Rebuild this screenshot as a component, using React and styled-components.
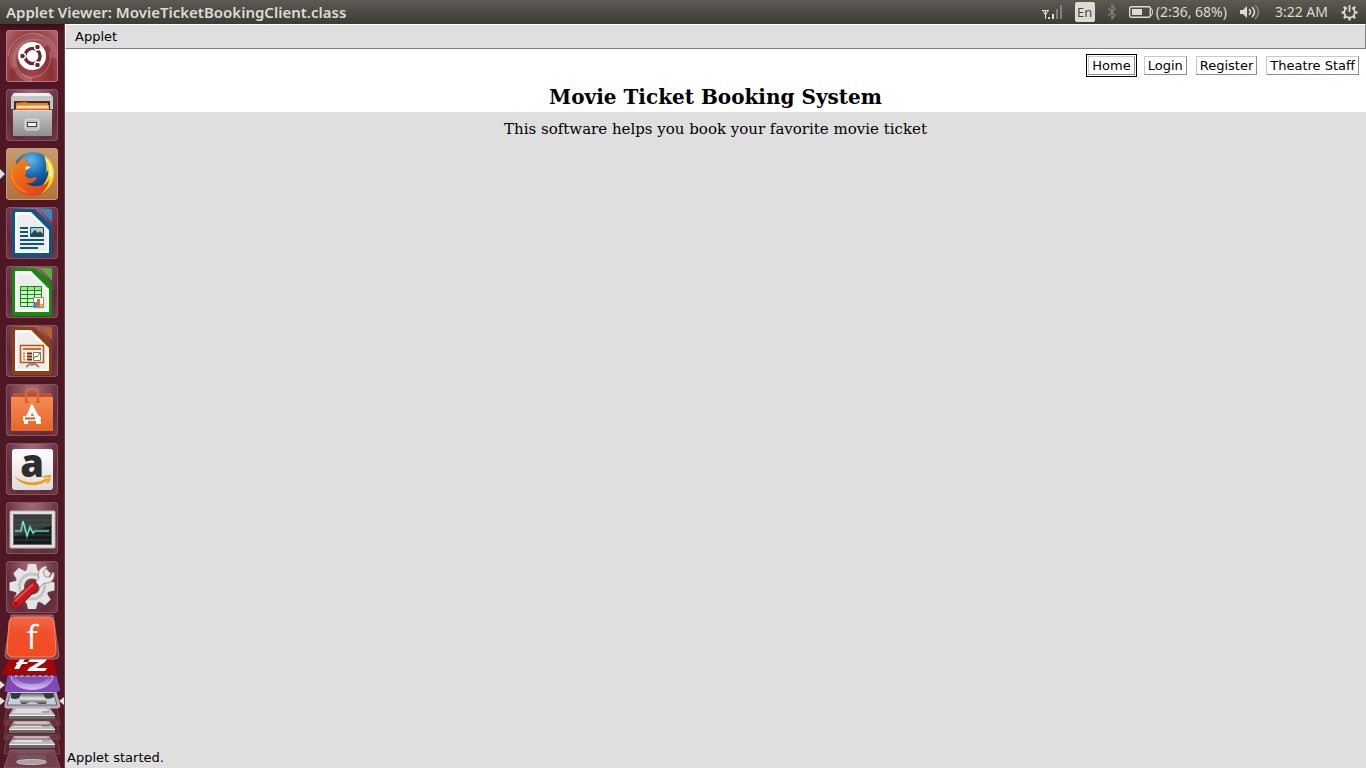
import React from 'react';
import styled, { createGlobalStyle } from 'styled-components';

const GlobalStyle = createGlobalStyle`
  * { box-sizing: border-box; }
  body { margin: 0; background: #dfdfdf; }
  button { font: inherit; cursor: default; }
`;

const ubuntuFont = '"Noto Sans", "Open Sans", sans-serif';

const Desktop = styled.div`
  display: grid;
  grid-template-rows: 24px 1fr;
  height: 100vh;
  overflow: hidden;
`;

const TopPanel = styled.header`
  display: flex;
  justify-content: space-between;
  align-items: center;
  padding: 0 8px 0 6px;
  background: linear-gradient(#5c5a51, #3c3b37);
  color: #dfdbd2;
  font-family: ${ubuntuFont};
`;

const WindowTitle = styled.h1`
  margin: 0;
  font-size: 15px;
  line-height: 24px;
  font-weight: 600;
`;

const Indicators = styled.div`
  display: flex;
  align-items: center;
  gap: 13px;
  font-size: 14px;
  line-height: 24px;
`;

const Indicator = styled.button`
  display: flex;
  align-items: center;
  gap: 3px;
  padding: 0;
  border: 0;
  background: none;
  color: inherit;
  white-space: nowrap;
  svg { display: block; }
`;

const KeyboardBadge = styled.span`
  width: 20px;
  height: 20px;
  border-radius: 2px;
  background: #dfdbd2;
  color: #4a4841;
  font-size: 13px;
  line-height: 20px;
  text-align: center;
`;

const Body = styled.div`
  display: grid;
  grid-template-columns: 65px 1fr;
  min-height: 0;
`;

const Launcher = styled.nav`
  display: flex;
  flex-direction: column;
  align-items: flex-start;
  overflow: hidden;
  padding-top: 6px;
  border-right: 1px solid #6b4357;
  background: linear-gradient(#390d17, #4f1723 8px, #501824);
`;

const Tile = styled.button`
  flex: none;
  width: 52px;
  height: 52px;
  margin: 0 0 7px 6px;
  padding: 0;
  border: 0;
  border-radius: 4px;
  background: ${(p) => p.$fill};
  box-shadow: inset 0 0 0 1px ${(p) => p.$edge || '#865460'};
  svg { display: block; overflow: visible; }
`;

const TileSlot = styled.div`
  position: relative;
`;

const RunningMark = styled.svg`
  position: absolute;
  left: 0;
  top: 21px;
`;

const Stack = styled.div`
  flex: none;
  height: 155px;
  margin-top: -7px;
  svg { display: block; }
`;

const AppletWindow = styled.main`
  display: flex;
  flex-direction: column;
  min-width: 0;
  background: #dfdfdf;
  color: #000;
  font-family: "DejaVu Sans", sans-serif;
  font-size: 13px;
`;

const MenuBar = styled.div`
  flex: none;
  display: flex;
  align-items: center;
  height: 25px;
  border: 1px solid #808080;
  border-top-color: #fff;
  border-left-color: #fff;
`;

const MenuItem = styled.button`
  padding: 0 9px;
  border: 0;
  background: none;
  color: inherit;
`;

const Heading = styled.section`
  flex: none;
  height: 63px;
  background: #fff;
`;

const ButtonRow = styled.div`
  display: flex;
  justify-content: flex-end;
  align-items: center;
  gap: 9px;
  padding: 7px 7px 0 0;
`;

const AwtButton = styled.button`
  height: 19px;
  padding: 0 3px;
  border: 1px solid;
  border-color: #c8c8c8 #8c8c8c #8c8c8c #c8c8c8;
  outline: ${(p) => (p.$focused ? '1px solid #000' : '0')};
  outline-offset: 1px;
  background: #fff;
  color: #000;
  line-height: 17px;
`;

const Title = styled.h2`
  margin: 8px 0 0;
  font-family: "DejaVu Serif", serif;
  font-size: 20px;
  line-height: 28px;
  font-weight: 700;
  text-align: center;
`;

const Tagline = styled.p`
  flex: 1;
  margin: 0;
  padding-top: 7px;
  font-family: "DejaVu Serif", serif;
  font-size: 15px;
  line-height: 20px;
  text-align: center;
`;

const Status = styled.footer`
  padding: 0 2px 1px;
  line-height: 18px;
`;

const Svg = (props) => <svg width="52" height="52" viewBox="0 0 52 52" aria-hidden="true" {...props} />;

const gloss = 'radial-gradient(ellipse at 50% -10%, #a7737f 0, #81495a 45%, #622b3c 75%, #713d4b 100%)';

const DashIcon = () => (
  <Svg>
    <g fill="none" stroke="#fff">
      <path d="M8 38C2 20 18 4 36 8c8 2 13 10 12 20" strokeWidth="6" opacity=".14" />
      <path d="M26 50C8 48 6 30 12 20C18 10 32 8 40 16" strokeWidth="5" opacity=".16" />
      <path d="M16 44c14 10 32-4 28-22M2 26C4 10 22-2 38 6" strokeWidth="1" opacity=".3" />
    </g>
    <circle cx="26" cy="26" r="14" fill="#fff" />
    <circle cx="26.500" cy="26" r="7.500" fill="none" stroke="#722533" strokeWidth="3.500" />
    <g stroke="#fff" strokeWidth="1.400">
      <path d="M26.500 26L14 26M26.500 26L33 15M26.500 26L33 37" opacity=".8" />
      <g fill="#722533">
        <circle cx="16.500" cy="26" r="3" />
        <circle cx="31.500" cy="17" r="3" />
        <circle cx="31.500" cy="35" r="3" />
      </g>
    </g>
    <circle cx="26.500" cy="26" r="5.800" fill="#fff" />
  </Svg>
);

const FilesIcon = () => (
  <Svg>
    <defs>
      <linearGradient id="cab" x2="0" y2="1"><stop stopColor="#c9c9c9" /><stop offset="1" stopColor="#8f8f8f" /></linearGradient>
    </defs>
    <path d="M8 4h35l4 4v12H5V8z" fill="#c6c6c6" />
    <path d="M8 4h35l3 3H6z" fill="#efefef" />
    <path d="M8 12h36v10H8z" fill="#3b302c" />
    <path d="M10 14l10-1 2 1h20v8H10z" fill="#e78118" />
    <path d="M10 16h33v6H10z" fill="#f6a14b" />
    <path d="M11 18h31" stroke="#fff7e8" strokeWidth="1.500" />
    <path d="M9 20h34v2H9z" fill="#e56415" />
    <path d="M7 21h39v26H7z" fill="url(#cab)" />
    <path d="M7 21.500h39" stroke="#d8d8d8" />
    <rect x="19" y="30" width="14" height="11" rx="2" fill="#bdbdbd" stroke="#e1e1e1" />
    <rect x="21.500" y="33.500" width="9" height="4" fill="#eee" stroke="#444" />
  </Svg>
);

const FirefoxIcon = () => (
  <Svg>
    <defs>
      <radialGradient id="globe" cx=".45" cy=".2" r=".8"><stop stopColor="#5fb8ea" /><stop offset=".5" stopColor="#1266ad" /><stop offset="1" stopColor="#0a2b62" /></radialGradient>
      <linearGradient id="fox" x1="0" y1="0" x2="1" y2="1"><stop stopColor="#f29018" /><stop offset=".5" stopColor="#ea5b1b" /><stop offset="1" stopColor="#d13f12" /></linearGradient>
    </defs>
    <circle cx="27" cy="24" r="20" fill="url(#globe)" />
    <path d="M43 12c4 5 6 11 5 17C47 40 38 48 26 48S5 40 4 29c0-7 2-12 5-17 0 2 1 3 2 4 2-3 5-6 9-8-1 3 0 6 2 8l3 1c0 3-4 4-5 6 0 2 0 3-1 4 2 4 6 4 9 2l3 1c-2 4-6 6-11 5 7 5 16 4 21-2 5-6 5-13 2-21z" fill="url(#fox)" />
    <path d="M38 7c8 5 11 13 10 21-1 9-7 15-13 18 5-5 8-9 8-15-2 4-4 5-6 6 4-5 6-11 5-15l-2 3c1-6 0-12-2-18z" fill="#ffd22a" />
    <path d="M40 11c4 5 5 10 4 17M44 16c2 5 2 9 1 14" stroke="#fff4a5" strokeWidth="1.500" fill="none" />
    <path d="M20 18l5 1-3 2-3 1z" fill="#f7e6cf" />
    <path d="M6 22c-1 10 4 18 14 22" stroke="#ffa02c" strokeWidth="2" fill="none" opacity=".4" />
  </Svg>
);

const DocumentIcon = ({ color, light, children }) => (
  <Svg>
    <path d="M6 5q0-3 3-3h20l17 17v28q0 3-3 3H9q-3 0-3-3z" fill={color} />
    <path d="M9 6q0-1 1-1h15l18 18v23H9z" fill="#fbfbfb" />
    <path d="M11 8h13l17 16v20H11z" fill="#ededed" />
    <path d="M34 2h10q2 0 2 2v11z" fill={light} />
    {children}
  </Svg>
);

const WriterIcon = () => (
  <DocumentIcon color="#0d568b" light="#3987bb">
    <path d="M14 21h8M14 25h8M14 29h8M14 33h24M14 37h24M14 41h18" stroke="#0b5585" strokeWidth="2" />
    <path d="M24.500 20.500h13v9h-13z" fill="#8fd1ef" stroke="#0b5585" />
    <path d="M25 29v-2l4-4 3 3 2-2 3 3v2z" fill="#3e423c" />
    <circle cx="34.500" cy="23" r="1.500" fill="#ffcb35" />
  </DocumentIcon>
);

const CalcIcon = () => (
  <DocumentIcon color="#168c0e" light="#4db43c">
    <path d="M14.500 20.500h21v20h-21z" fill="#d4ffd0" stroke="#178a10" />
    <path d="M15 21h20v4H15z" fill="#9bea8e" />
    <path d="M14 24.500h22M14 28.500h22M14 32.500h22M14 36.500h22M21.500 20v21M28.500 20v21" stroke="#178a10" />
    <path d="M27.500 31.500h10v10h-10z" fill="#fff" stroke="#8a8a8a" />
    <path d="M28 36h3v5h-3z" fill="#2c93dc" />
    <path d="M31 33h3v8h-3z" fill="#e56a20" />
    <path d="M34 38h3v3h-3z" fill="#f5b71c" />
  </DocumentIcon>
);

const ImpressIcon = () => (
  <DocumentIcon color="#8e3f0d" light="#b8602c">
    <path d="M26 38v3m-6 1l4-3h5l4 3" stroke="#888" strokeWidth="2" fill="none" />
    <path d="M14.500 20.500h23v17h-23z" fill="#fff1e6" stroke="#c2500f" strokeWidth="1.500" />
    <path d="M17 24h18" stroke="#cf6930" strokeWidth="2" />
    <path d="M17 28.500h2M17 31.500h2M17 34.500h2" stroke="#da8452" strokeWidth="2" />
    <path d="M21 28.500h5M21 31.500h5M21 34.500h5" stroke="#722a07" strokeWidth="2" />
    <path d="M27.500 27.500h7v8h-7z" fill="#fff" stroke="#777" />
    <path d="M28 33l2-2 1 1 3-4" stroke="#25932a" fill="none" />
  </DocumentIcon>
);

const SoftwareIcon = () => (
  <Svg>
    <defs><linearGradient id="bag" x2="0" y2="1"><stop stopColor="#f58b54" /><stop offset="1" stopColor="#e76527" /></linearGradient></defs>
    <path d="M7 9h38l2 5H5z" fill="#bd522c" />
    <path d="M5 13h42v34H5z" fill="url(#bag)" />
    <path d="M20 18V9q0-4 4-4h4q4 0 4 4v9" fill="none" stroke="#d46943" strokeWidth="2.500" />
    <path d="M19 18h4M30 18h4" stroke="#b84b22" />
    <path d="M22 33l4-9 5 9" stroke="#fff" strokeWidth="4" fill="none" />
    <path d="M24 22h4v4h-4z" fill="#fff" />
    <path d="M17 32h16q2 0 2 2.500T33 37H17z" fill="#fff" />
    <path d="M19 34.500h10" stroke="#e55310" strokeWidth="2" />
    <path d="M18 38.500h4M30 38.500h5" stroke="#fff" strokeWidth="3" />
  </Svg>
);

const AmazonIcon = () => (
  <Svg>
    <defs><linearGradient id="amz" x2="0" y2="1"><stop stopColor="#fff" /><stop offset="1" stopColor="#ddd" /></linearGradient></defs>
    <rect x="6" y="6" width="41" height="41" rx="3" fill="url(#amz)" />
    <text x="26" y="34" textAnchor="middle" fontFamily="Open Sans, sans-serif" fontWeight="800" fontSize="38" fill="#2e2e2e">a</text>
    <path d="M8 33c10 8 24 8 33 2l1 2c-11 8-26 7-34-4z" fill="#f79a16" />
    <path d="M37 34c3-1 5-1 7-1 0 3-1 5-3 7" stroke="#f79a16" strokeWidth="1.800" fill="none" />
  </Svg>
);

const MonitorIcon = () => (
  <Svg>
    <rect x="4" y="9" width="45" height="37" rx="1" fill="#e2e2e2" stroke="#b3b3b3" />
    <path d="M7 12h39v31H7z" fill="#666" />
    <path d="M8 13h37v29H8z" fill="#161a1a" />
    <path d="M8 13h37v11L8 34z" fill="#4a4f4f" opacity=".7" />
    <path d="M8 18h37M8 23h37M8 28h37M8 33h37M8 38h37" stroke="#596260" opacity=".5" />
    <path d="M9 29h6l2-10 4 15 3-9 3 6 2-2h14" stroke="#2b8f7b" strokeWidth="3" opacity=".4" fill="none" />
    <path d="M9 29h6l2-10 4 15 3-9 3 6 2-2h14" stroke="#85f0d3" strokeWidth="1.200" fill="none" />
  </Svg>
);

const SettingsIcon = () => (
  <Svg>
    <g fill="#e4e4e4">
      {[0, 45, 90, 135].map((a) => (
        <path key={a} d="M22 3h8l2 9v28l-2 8h-8l-2-8V12z" transform={`rotate(${a} 26 25.500)`} />
      ))}
    </g>
    <circle cx="26" cy="25.500" r="17" fill="#e4e4e4" />
    <circle cx="26" cy="25.500" r="12.500" fill="none" stroke="#c5c5c5" strokeWidth="3" />
    <circle cx="26" cy="25.500" r="8" fill="#733f4b" />
    <path d="M28 23l5-6c-2-6 1-11 7-12l1 1-4 5 2 5 5 0 3-5 1 1c1 7-4 11-10 10l-6 6z" fill="#ececec" stroke="#999" />
    <path d="M6 40l21-20q3 0 6 6L13 46q-3 2-6 0t-1-6z" fill="#c61920" stroke="#8d1015" />
    <path d="M9 40l18-17" stroke="#e2504f" strokeWidth="2" />
    <circle cx="10" cy="43" r="1.500" fill="#7d0b11" />
  </Svg>
);

const Plate = ({ y }) => (
  <g transform={`translate(0 ${y})`}>
    <path d="M7 -1H57L60 18H4z" fill="#945d6a" fillOpacity=".2" stroke="#74404d" />
    <path d="M14 0H49L55 8H9z" fill="#bcbcbc" />
    <path d="M17 1H46L50 6H13z" fill="#dedede" />
    <path d="M9 8H55V12H9z" fill="#686868" />
    <path d="M9 8.500H55" stroke="#f0f0f0" />
    <path d="M42 5h7" stroke="#777" />
  </g>
);

const StackedIcons = () => (
  <svg width="64" height="155" viewBox="0 0 64 155" role="img" aria-label="More applications">
    <defs>
      <linearGradient id="fred" x2="0" y2="1"><stop stopColor="#f06a45" /><stop offset=".4" stopColor="#ee502b" /><stop offset="1" stopColor="#f44b20" /></linearGradient>
      <linearGradient id="orb" x2="0" y2="1"><stop stopColor="#7753b4" /><stop offset="1" stopColor="#d9c1f5" /></linearGradient>
      <linearGradient id="metal" x2="0" y2="1"><stop stopColor="#555" /><stop offset=".5" stopColor="#e4e4e4" /><stop offset="1" stopColor="#444" /></linearGradient>
    </defs>
    <path d="M10 137H54L60 155H4z" fill="#73404d" stroke="#8d5965" />
    <path d="M18 137h28v12H17z" fill="#7c5560" opacity=".8" />
    <ellipse cx="31.500" cy="149" rx="15" ry="2.500" fill="#a9a09f" stroke="#c8c2c1" />
    <Plate y={123} />
    <Plate y={108} />
    <Plate y={94} />
    <path d="M9 76H55L60 93Q60 95 57 95H7Q4 95 5 92z" fill="#bdaab5" stroke="#d5adb7" />
    <path d="M11 78H53L57 92H7z" fill="#c5d0dd" stroke="#5a6a7d" />
    <path d="M11 80h11l-3 5q-4 2-8 0zM42 80h11l1 4q-5 3-9 1z" fill="#33383c" />
    <path d="M21 80h22l2 5q3 3 1 6h-7q-3-2-7-2t-6 2h-4q-4-2-1-6z" fill="url(#metal)" />
    <path d="M8 61H56L60 76Q60 79 57 79H7Q4 79 5 76z" fill="#8149b5" />
    <path d="M11 63H53C52 81 12 81 11 63z" fill="url(#orb)" stroke="#cdb1ed" />
    <path d="M16 64h32q-3 7-16 7T16 64z" fill="#7142a9" opacity=".6" />
    <path d="M11 43H53L57 60l-2 3-3-2-3 2-3-2-3 2-3-2-3 2-3-2-3 2-3-2-3 2-3-2-3 2-3-2-3 2-3-2-3 2-3-2-3 1z" fill="#a40608" stroke="#701016" />
    <path d="M20 46h5l-6 10h-5zM17 49h11l-1 2H16zM30 46h17l-2 3-9 6h11l-2 3H27l2-3 10-6H28z" fill="#fff" />
    <path d="M11 2H53L59 42Q59 46 55 46H9Q5 46 5 42z" fill="#81404d" stroke="#a86770" />
    <path d="M15 4H49Q53 4 54 9L56 38Q56 44 50 44H13Q7 44 7 38L9 9Q10 4 15 4z" fill="url(#fred)" stroke="#ff855f" />
    <text x="32" y="36" textAnchor="middle" fontFamily="Open Sans, sans-serif" fontSize="33" fill="#fff">f</text>
    <path d="M0 68l5 4-5 4zM0 84l5 4-5 4zM64 84l-5 4 5 4z" fill="#ddd" />
  </svg>
);

const apps = [
  ['Dash', DashIcon, 'radial-gradient(ellipse at 50% 100%, #a54a51, #8c3037 55%, #b36d73)', '#bc7478'],
  ['Files', FilesIcon, gloss],
  ['Firefox', FirefoxIcon, 'linear-gradient(#c79c70, #ae713e)', '#c99b6e', true],
  ['LibreOffice Writer', WriterIcon, gloss],
  ['LibreOffice Calc', CalcIcon, gloss],
  ['LibreOffice Impress', ImpressIcon, gloss],
  ['Ubuntu Software Center', SoftwareIcon, gloss],
  ['Amazon', AmazonIcon, gloss],
  ['System Monitor', MonitorIcon, gloss],
  ['System Settings', SettingsIcon, gloss],
];

const SignalIcon = () => (
  <svg width="20" height="16" viewBox="0 0 20 16" aria-hidden="true">
    <path d="M0 6.500h7M3.500 6v9M1 7l2.500 4L6 7" stroke="#dfdbd2" fill="none" />
    <path d="M6 13h2v2H6zM10 10h2v5h-2z" fill="#dfdbd2" />
    <path d="M14 5h2v10h-2zM18 1h2v14h-2z" fill="#807e76" />
  </svg>
);

const BluetoothIcon = () => (
  <svg width="8" height="16" viewBox="0 0 8 16" aria-hidden="true">
    <path d="M0 4l7 7-3 4V1l3 4-7 7" fill="none" stroke="#86837b" strokeWidth="1.200" />
  </svg>
);

const BatteryIcon = () => (
  <svg width="24" height="12" viewBox="0 0 24 12" aria-hidden="true">
    <rect x=".7" y=".7" width="20.600" height="10.600" rx="1.500" fill="none" stroke="#dfdbd2" strokeWidth="1.400" />
    <path d="M3 3h10v6H3z" fill="#dfdbd2" />
    <path d="M22 2.500q1.500 0 1.500 3.500T22 9.500" fill="none" stroke="#dfdbd2" />
  </svg>
);

const VolumeIcon = () => (
  <svg width="22" height="16" viewBox="0 0 22 16" aria-hidden="true">
    <path d="M0 6h3l4-4v12l-4-4H0z" fill="#dfdbd2" />
    <path d="M9 5q3 3 0 6M12 3q5 5 0 10" fill="none" stroke="#dfdbd2" strokeWidth="1.600" />
    <path d="M15 1q7 7 0 14" fill="none" stroke="#85827a" strokeWidth="1.600" />
  </svg>
);

const SessionIcon = () => (
  <svg width="17" height="17" viewBox="0 0 17 17" aria-hidden="true">
    <g stroke="#dfdbd2" strokeWidth="2.200">
      {[45, 90, 135, 180, 225, 270, 315].map((a) => (
        <path key={a} d="M8.500 3V.5" transform={`rotate(${a} 8.500 8.500)`} />
      ))}
      <path d="M6 3.700a5.300 5.300 0 1 0 5 0M8.500 1v7" fill="none" strokeWidth="1.700" />
    </g>
  </svg>
);

export default function App() {
  return (
    <Desktop>
      <GlobalStyle />
      <TopPanel>
        <WindowTitle>Applet Viewer: MovieTicketBookingClient.class</WindowTitle>
        <Indicators>
          <Indicator aria-label="Network"><SignalIcon /></Indicator>
          <Indicator><KeyboardBadge>En</KeyboardBadge></Indicator>
          <Indicator aria-label="Bluetooth"><BluetoothIcon /></Indicator>
          <Indicator><BatteryIcon />(2:36, 68%)</Indicator>
          <Indicator aria-label="Volume"><VolumeIcon /></Indicator>
          <Indicator>3:22 AM</Indicator>
          <Indicator aria-label="Session"><SessionIcon /></Indicator>
        </Indicators>
      </TopPanel>
      <Body>
        <Launcher aria-label="Launcher">
          {apps.map(([name, Icon, fill, edge, running]) => (
            <TileSlot key={name}>
              <Tile aria-label={name} $fill={fill} $edge={edge}><Icon /></Tile>
              {running && (
                <RunningMark width="5" height="10" viewBox="0 0 5 10" aria-hidden="true">
                  <path d="M0 0l5 5-5 5z" fill="#ddd" />
                </RunningMark>
              )}
            </TileSlot>
          ))}
          <Stack><StackedIcons /></Stack>
        </Launcher>
        <AppletWindow>
          <MenuBar><MenuItem>Applet</MenuItem></MenuBar>
          <Heading>
            <ButtonRow>
              <AwtButton $focused>Home</AwtButton>
              <AwtButton>Login</AwtButton>
              <AwtButton>Register</AwtButton>
              <AwtButton>Theatre Staff</AwtButton>
            </ButtonRow>
            <Title>Movie Ticket Booking System</Title>
          </Heading>
          <Tagline>This software helps you book your favorite movie ticket</Tagline>
          <Status>Applet started.</Status>
        </AppletWindow>
      </Body>
    </Desktop>
  );
}
